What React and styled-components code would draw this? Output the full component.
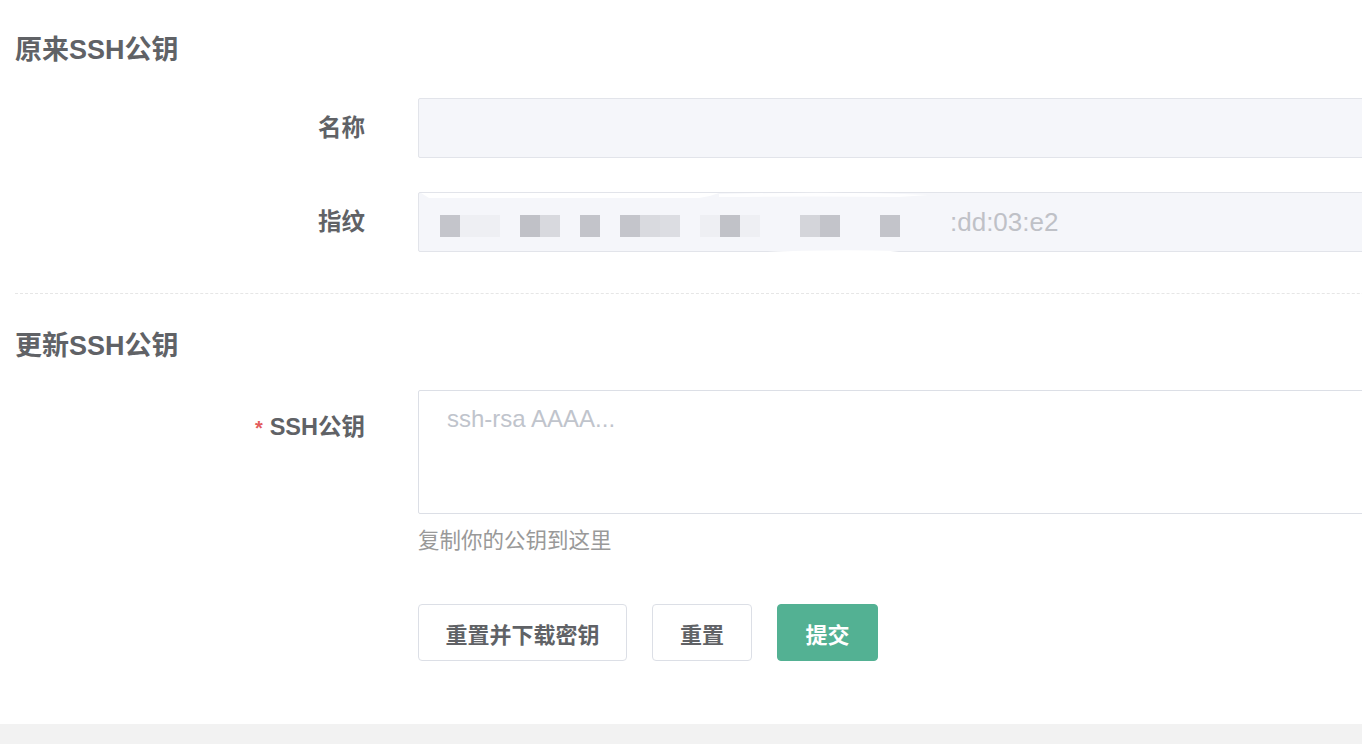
import styled, { createGlobalStyle } from "styled-components";

const GlobalStyle = createGlobalStyle`
  html, body {
    margin: 0;
    padding: 0;
    background: #fff;
    overflow: hidden;
  }
  body {
    font-family: "Liberation Sans", "Noto Sans CJK SC", sans-serif;
  }
`;

const Page = styled.div`
  width: 1362px;
  height: 744px;
  display: flex;
  flex-direction: column;
  overflow: hidden;
`;

const Content = styled.div`
  flex: 1;
  padding: 32px 0 0 15px;
  width: 1500px;
`;

const SectionTitle = styled.h2`
  margin: ${({ top }) => top || 0}px 0 0;
  font-size: 27px;
  line-height: 36px;
  font-weight: 700;
  color: #606266;
`;

const Row = styled.div`
  display: grid;
  grid-template-columns: 350px 1fr;
  column-gap: 53px;
  margin-top: ${({ top }) => top}px;
`;

const Label = styled.label`
  text-align: right;
  font-size: 23.5px;
  font-weight: 700;
  color: #606266;
  line-height: ${({ lh }) => lh || 60}px;
  align-self: start;
  padding-top: ${({ pt }) => pt || 0}px;
`;

const Star = styled.span`
  color: #e35d5d;
  font-size: 20px;
  margin-right: 7px;
`;

const ReadBox = styled.div`
  position: relative;
  height: 58px;
  background: #f5f6fa;
  border: 1px solid #e2e4ea;
  border-radius: 2px;
  display: flex;
  align-items: center;
`;

const Mono = styled.span`
  margin-left: 531px;
  font-size: 26px;
  color: #bfc1c7;
  font-family: "Liberation Sans", sans-serif;
`;

const Mosaic = styled.svg`
  position: absolute;
  left: 21px;
  top: 22px;
`;

const Smudge = styled.svg`
  position: absolute;
  left: 0;
  top: -6px;
  pointer-events: none;
`;

const TextArea = styled.textarea`
  display: block;
  width: 100%;
  height: 124px;
  box-sizing: border-box;
  border: 1px solid #dcdfe6;
  border-radius: 2px;
  padding: 13px 28px;
  font-family: "Liberation Sans", "Noto Sans CJK SC", sans-serif;
  font-size: 24px;
  line-height: 30px;
  color: #606266;
  resize: none;
  outline: none;
  &::placeholder {
    color: #c0c4cc;
  }
`;

const Help = styled.div`
  margin-top: 12px;
  font-size: 21.5px;
  line-height: 30px;
  color: #999;
`;

const Divider = styled.div`
  margin-top: 41px;
  border-top: 1px dashed #e6e6e6;
`;

const Buttons = styled.div`
  display: flex;
  gap: 25px;
`;

const Button = styled.button`
  height: 57px;
  padding: 0 ${({ pad }) => pad}px;
  border-radius: 4px;
  font-family: "Liberation Sans", "Noto Sans CJK SC", sans-serif;
  font-size: 22px;
  font-weight: 700;
  cursor: pointer;
  border: 1px solid ${({ primary }) => (primary ? "#53b193" : "#dcdfe6")};
  background: ${({ primary }) => (primary ? "#53b193" : "#fff")};
  color: ${({ primary }) => (primary ? "#fff" : "#606266")};
`;

const Footer = styled.div`
  height: 20px;
  background: #f2f2f2;
`;

const blocks = [
  [0, "#c4c5cb"], [20, "#eeeff3"], [40, "#eeeff3"],
  [80, "#c0c1c7"], [100, "#d8d9de"],
  [140, "#c3c4ca"],
  [180, "#c4c5cb"], [200, "#d9dadf"], [220, "#dcdde2"],
  [260, "#eeeff3"], [280, "#c1c2c8"], [300, "#eeeff3"],
  [360, "#d4d5da"], [380, "#c3c4ca"],
  [440, "#c3c4ca"],
];

export default function App() {
  return (
    <Page>
      <GlobalStyle />
      <Content>
        <SectionTitle>原来SSH公钥</SectionTitle>
        <Row top={30}>
          <Label>名称</Label>
          <ReadBox />
        </Row>
        <Row top={34}>
          <Label>指纹</Label>
          <ReadBox>
            <Mosaic width="460" height="22">
              {blocks.map(([x, c]) => (
                <rect key={x} x={x} y="0" width="20" height="22" fill={c} />
              ))}
            </Mosaic>
            <Smudge width="520" height="72">
              <path d="M2 6 L300 6 Q290 10 280 11 L10 11 Z" fill="#fff" />
              <path d="M300 7 Q420 4 510 8 L480 10 Q400 9 300 10 Z" fill="#fff" opacity="0.9" />
              <path d="M330 66 Q400 62 480 64 Q420 72 340 70 Z" fill="#fff" />
            </Smudge>
            <Mono>:dd:03:e2</Mono>
          </ReadBox>
        </Row>
        <Divider />
        <SectionTitle top={34}>更新SSH公钥</SectionTitle>
        <Row top={26}>
          <Label lh={30} pt={22}>
            <Star>*</Star>SSH公钥
          </Label>
          <div>
            <TextArea placeholder="ssh-rsa AAAA..." />
            <Help>复制你的公钥到这里</Help>
          </div>
        </Row>
        <Row top={48}>
          <div />
          <Buttons>
            <Button pad={26.5}>重置并下载密钥</Button>
            <Button pad={27}>重置</Button>
            <Button pad={27.5} primary>提交</Button>
          </Buttons>
        </Row>
      </Content>
      <Footer />
    </Page>
  );
}
